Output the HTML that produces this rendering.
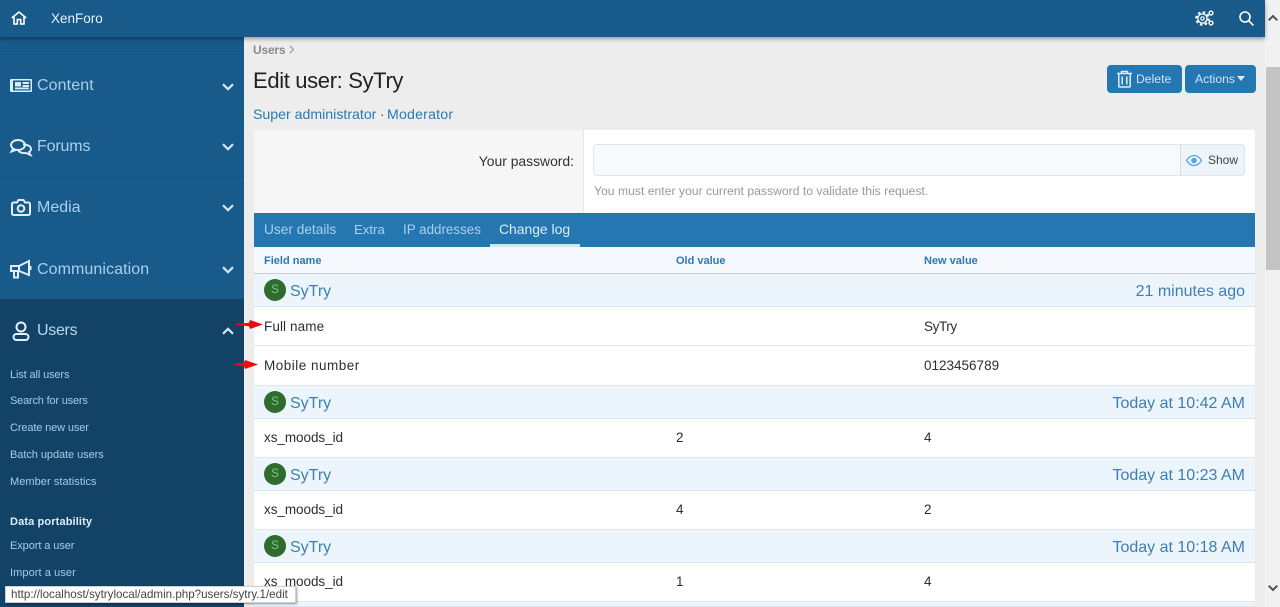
<!DOCTYPE html>
<html><head><meta charset="utf-8"><title>Edit user: SyTry</title>
<style>
html,body{margin:0;padding:0;width:1280px;height:607px;overflow:hidden;background:#ededed;font-family:"Liberation Sans",sans-serif;}
.a,.t{position:absolute;}
.t{white-space:nowrap;line-height:1;}
.nav{color:#a9d0ee;font-size:16px;left:37px;}
.sub{color:#a5cbe8;font-size:11px;left:10px;}
.h{color:#2d78b0;font-size:11px;font-weight:bold;}
.c{color:#2e2e2e;font-size:13.5px;}
.n{color:#3d7fb5;font-size:16px;left:290px;}
.d{color:#3d7fb5;font-size:16px;right:35px;}
.row{left:254px;width:1001px;background:#fff;border-bottom:1px solid #e6e6e6;box-sizing:border-box;}
.hd{left:254px;width:1001px;background:#edf5fc;border-bottom:1px solid #d8e4ee;box-sizing:border-box;}
.av{left:264px;width:22px;height:22px;border-radius:50%;background:#2f6b2f;color:#7fc47f;font-size:12px;line-height:20px;text-align:center;}
svg{position:absolute;overflow:visible;}
</style></head><body>

<!-- sidebar -->
<div class="a" style="left:0;top:37px;width:244px;height:570px;background:#185a8a;"></div>
<div class="a" style="left:0;top:54px;width:244px;height:1px;background:#175583;"></div>
<div class="a" style="left:0;top:115px;width:244px;height:1px;background:#175583;"></div>
<div class="a" style="left:0;top:176px;width:244px;height:1px;background:#175583;"></div>
<div class="a" style="left:0;top:237px;width:244px;height:1px;background:#175583;"></div>
<div class="a" style="left:0;top:299px;width:244px;height:308px;background:#124367;"></div>

<!-- header -->
<div class="a" style="left:0;top:0;width:1265px;height:37px;background:#185a8a;box-shadow:0 2px 4px rgba(0,0,0,.35);z-index:3;"></div>
<svg style="left:11px;top:11px;z-index:4" width="16" height="14" viewBox="0 0 16 14" fill="none" stroke="#fff" stroke-width="1.6"><path d="M0.8 7 8 1l7.2 6M3 5.5V13h3.3V8.6h3.4V13H13V5.5"/></svg>
<span class="t" style="left:51px;top:12px;color:#e6f1fa;font-size:13.500px;z-index:4">XenForo</span>
<svg style="left:1196px;top:10px;z-index:4" width="18" height="16" viewBox="0 0 18 16" fill="none" stroke="#fff"><circle cx="6.500" cy="8.500" r="6.300" stroke-width="2" stroke-dasharray="2.600 2.350"/><circle cx="6.500" cy="8.500" r="4.600" stroke-width="1.300"/><circle cx="6.500" cy="8.500" r="1.700" stroke-width="1.200"/><circle cx="15" cy="3" r="1.900" stroke-width="1.400"/><circle cx="15" cy="13" r="1.900" stroke-width="1.400"/></svg>
<svg style="left:1239px;top:11px;z-index:4" width="15" height="15" viewBox="0 0 15 15" fill="none" stroke="#fff" stroke-width="1.6"><circle cx="6" cy="6" r="5"/><path d="M9.700 9.700 14.400 14.400"/></svg>

<!-- scrollbar -->
<div class="a" style="left:1265px;top:0;width:15px;height:607px;background:#f1f1f1;"></div>
<div class="a" style="left:1266px;top:67px;width:14px;height:203px;background:#c4c4c4;"></div>
<svg style="left:1268px;top:15px" width="10" height="6" viewBox="0 0 10 6" fill="none" stroke="#505050" stroke-width="2"><path d="M0.700 5.300 5 1l4.300 4.300"/></svg>
<svg style="left:1268px;top:585px" width="10" height="6" viewBox="0 0 10 6" fill="none" stroke="#505050" stroke-width="2"><path d="M0.700 0.700 5 5l4.300-4.300"/></svg>

<!-- nav -->
<svg style="left:10px;top:79px" width="22" height="13" viewBox="0 0 22 13"><rect x="0" y="0" width="22" height="13" rx="1" fill="#d8ecfb"/><rect x="3" y="1.500" width="17.500" height="10" fill="#185a8a"/><rect x="5" y="3" width="6" height="4.500" fill="#d8ecfb"/><rect x="12.500" y="3" width="6.500" height="2" fill="#d8ecfb"/><rect x="12.500" y="6" width="6.500" height="2" fill="#d8ecfb"/><rect x="5" y="8.500" width="14" height="1.800" fill="#d8ecfb"/></svg>
<span class="t nav" style="top:78px;letter-spacing:.1px">Content</span>
<svg style="left:10px;top:139px" width="22" height="17" viewBox="0 0 22 17" fill="none" stroke="#e0effb" stroke-width="1.900"><ellipse cx="8" cy="6" rx="7" ry="5"/><path d="M3 10 1.500 12.500 6 11"/><path d="M13 5.500c4 0 8 1.500 8 4.500 0 1.500-1 2.500-2 3.200l1.500 2.800-4.500-2c-3 .5-7-.5-8-3"/></svg>
<span class="t nav" style="top:139px;letter-spacing:-.15px">Forums</span>
<svg style="left:11px;top:199px" width="20" height="17" viewBox="0 0 20 17" fill="none" stroke="#e0effb" stroke-width="2"><path d="M2.500 3.500h3.500L7.500 1h5L14 3.500h3.500a1.500 1.500 0 0 1 1.500 1.500v9.500a1.500 1.500 0 0 1-1.500 1.500h-15A1.500 1.500 0 0 1 1 14.500V5a1.500 1.500 0 0 1 1.500-1.500z"/><circle cx="10" cy="9.500" r="3.300"/></svg>
<span class="t nav" style="top:200px">Media</span>
<svg style="left:10px;top:260px" width="22" height="19" viewBox="0 0 22 19" fill="none" stroke="#e0effb" stroke-width="2"><path d="M1 6h8l10-5v14L9 11H1z"/><path d="M4 11v6.500h4V11"/><path d="M20.500 6v4"/><path d="M9 6v5"/></svg>
<span class="t nav" style="top:262px;letter-spacing:.08px">Communication</span>
<svg style="left:12px;top:321px" width="18" height="20" viewBox="0 0 18 20" fill="none" stroke="#e4f1fb" stroke-width="2"><circle cx="9" cy="6" r="4.500"/><rect x="1.500" y="13" width="15" height="6" rx="3"/></svg>
<span class="t nav" style="top:323px;color:#b9d8ef;letter-spacing:-.3px">Users</span>
<svg style="left:222px;top:83px" width="12" height="8" viewBox="0 0 12 8" fill="none" stroke="#cfe6f8" stroke-width="2.200"><path d="M1 1.200 6 6.200l5-5"/></svg>
<svg style="left:222px;top:143px" width="12" height="8" viewBox="0 0 12 8" fill="none" stroke="#cfe6f8" stroke-width="2.200"><path d="M1 1.200 6 6.200l5-5"/></svg>
<svg style="left:222px;top:204px" width="12" height="8" viewBox="0 0 12 8" fill="none" stroke="#cfe6f8" stroke-width="2.200"><path d="M1 1.200 6 6.200l5-5"/></svg>
<svg style="left:222px;top:266px" width="12" height="8" viewBox="0 0 12 8" fill="none" stroke="#cfe6f8" stroke-width="2.200"><path d="M1 1.200 6 6.200l5-5"/></svg>
<svg style="left:222px;top:327px" width="12" height="8" viewBox="0 0 12 8" fill="none" stroke="#cfe6f8" stroke-width="2.200"><path d="M1 6.800 6 1.800l5 5"/></svg>
<span class="t sub" style="top:370px;letter-spacing:-.13px">List all users</span>
<span class="t sub" style="top:396px;letter-spacing:-.19px">Search for users</span>
<span class="t sub" style="top:423px;letter-spacing:-.13px">Create new user</span>
<span class="t sub" style="top:450px;letter-spacing:-.06px">Batch update users</span>
<span class="t sub" style="top:477px;letter-spacing:.06px">Member statistics</span>
<span class="t sub" style="top:517px;color:#dcedfa;font-weight:bold;letter-spacing:.13px">Data portability</span>
<span class="t sub" style="top:541px;letter-spacing:-.08px">Export a user</span>
<span class="t sub" style="top:568px;letter-spacing:.08px">Import a user</span>

<!-- page head -->
<span class="t" style="left:253px;top:44px;color:#8a8a8a;font-size:12px;font-weight:bold;letter-spacing:-.2px">Users</span>
<svg style="left:289px;top:45px" width="6" height="9" viewBox="0 0 6 9" fill="none" stroke="#a0a0a0" stroke-width="1.300"><path d="M1 1l3.500 3.500L1 8"/></svg>
<span class="t" style="left:253px;top:70px;color:#222;font-size:22px;letter-spacing:-.35px">Edit user: SyTry</span>
<span class="t" style="left:253px;top:107px;color:#2d78b0;font-size:14.150px">Super administrator</span>
<span class="t" style="left:380px;top:107px;color:#555;font-size:14px">·</span>
<span class="t" style="left:387px;top:107px;color:#2d78b0;font-size:14.150px;letter-spacing:.2px">Moderator</span>

<div class="a" style="left:1107px;top:65px;width:75px;height:28px;background:#2577b1;border-radius:4px;"></div>
<svg style="left:1116px;top:70px" width="17" height="18" viewBox="0 0 17 18" fill="none" stroke="#dcedfa" stroke-width="1.500"><path d="M1 3.500h15M5.500 3.500V1.500h6v2M2.800 3.500V16a1 1 0 0 0 1 1h9.400a1 1 0 0 0 1-1V3.500M6.200 6.500v8M10.800 6.500v8"/></svg>
<span class="t" style="left:1136px;top:73px;color:#cfe4f5;font-size:12.200px">Delete</span>
<div class="a" style="left:1185px;top:65px;width:71px;height:28px;background:#2577b1;border-radius:4px;"></div>
<span class="t" style="left:1195px;top:73px;color:#cfe4f5;font-size:12.200px">Actions</span>
<div class="a" style="left:1237px;top:76px;width:0;height:0;border-left:4.500px solid transparent;border-right:4.500px solid transparent;border-top:5px solid #dcedfa;"></div>

<!-- form block -->
<div class="a" style="left:254px;top:130px;width:1001px;height:83px;background:#fff;border-radius:3px 3px 0 0;"></div>
<div class="a" style="left:254px;top:130px;width:330px;height:83px;background:#f6f6f6;border-right:1px solid #e6e6e6;box-sizing:border-box;border-radius:3px 0 0 0;"></div>
<span class="t" style="right:706px;top:155px;color:#333;font-size:13.900px">Your password:</span>
<div class="a" style="left:593px;top:144px;width:652px;height:32px;background:#f7fafd;border:1px solid #dfe5ea;box-sizing:border-box;border-radius:4px;"></div>
<div class="a" style="left:1180px;top:145px;width:64px;height:30px;background:#edf4fa;border-left:1px solid #d5dde3;box-sizing:border-box;border-radius:0 3px 3px 0;"></div>
<svg style="left:1186px;top:155px" width="16" height="11" viewBox="0 0 16 11"><path d="M.5 5.500C3 1.800 5.500.5 8 .5s5 1.300 7.500 5C13 9.200 10.500 10.500 8 10.500S3 9.200.5 5.500z" fill="none" stroke="#55a5e0" stroke-width="1.300"/><circle cx="8" cy="5.500" r="2.800" fill="#55a5e0"/></svg>
<span class="t" style="left:1208px;top:154px;color:#444;font-size:12px">Show</span>
<span class="t" style="left:594px;top:185px;color:#999;font-size:12.200px">You must enter your current password to validate this request.</span>

<!-- tabs -->
<div class="a" style="left:254px;top:213px;width:1001px;height:34px;background:#2577b1;"></div>
<span class="t" style="left:264px;top:223px;color:#a9d0ee;font-size:13.700px">User details</span>
<span class="t" style="left:354px;top:223px;color:#a9d0ee;font-size:13.200px">Extra</span>
<span class="t" style="left:403px;top:223px;color:#a9d0ee;font-size:13.400px">IP addresses</span>
<span class="t" style="left:499px;top:223px;color:#dcedfa;font-size:13.900px">Change log</span>
<div class="a" style="left:490px;top:244px;width:90px;height:3px;background:#d5e6f3;"></div>

<!-- table -->
<div class="a" style="left:254px;top:247px;width:1001px;height:27px;background:#f5f9fd;border-bottom:1px solid #c9ced2;box-sizing:border-box;"></div>
<span class="t h" style="left:264px;top:256px">Field name</span>
<span class="t h" style="left:676px;top:256px">Old value</span>
<span class="t h" style="left:924px;top:256px">New value</span>

<div class="a hd" style="top:274px;height:33px;"></div>
<div class="a av" style="top:279px">S</div>
<span class="t n" style="top:284px">SyTry</span>
<span class="t d" style="top:284px">21 minutes ago</span>
<div class="a row" style="top:307px;height:39px;"></div>
<span class="t c" style="left:264px;top:320px;letter-spacing:.1px">Full name</span>
<span class="t c" style="left:924px;top:320px;letter-spacing:-.4px">SyTry</span>
<div class="a row" style="top:346px;height:40px;"></div>
<span class="t c" style="left:264px;top:359px;letter-spacing:.5px">Mobile number</span>
<span class="t c" style="left:924px;top:359px">0123456789</span>

<div class="a hd" style="top:386px;height:33px;"></div>
<div class="a av" style="top:391px">S</div>
<span class="t n" style="top:396px">SyTry</span>
<span class="t d" style="top:396px">Today at 10:42 AM</span>
<div class="a row" style="top:419px;height:39px;"></div>
<span class="t c" style="left:264px;top:431px;letter-spacing:-.05px">xs_moods_id</span>
<span class="t c" style="left:676px;top:431px">2</span>
<span class="t c" style="left:924px;top:431px">4</span>

<div class="a hd" style="top:458px;height:33px;"></div>
<div class="a av" style="top:463px">S</div>
<span class="t n" style="top:468px">SyTry</span>
<span class="t d" style="top:468px">Today at 10:23 AM</span>
<div class="a row" style="top:491px;height:39px;"></div>
<span class="t c" style="left:264px;top:503px;letter-spacing:-.05px">xs_moods_id</span>
<span class="t c" style="left:676px;top:503px">4</span>
<span class="t c" style="left:924px;top:503px">2</span>

<div class="a hd" style="top:530px;height:33px;"></div>
<div class="a av" style="top:535px">S</div>
<span class="t n" style="top:540px">SyTry</span>
<span class="t d" style="top:540px">Today at 10:18 AM</span>
<div class="a row" style="top:563px;height:39px;"></div>
<span class="t c" style="left:264px;top:575px;letter-spacing:-.05px">xs_moods_id</span>
<span class="t c" style="left:676px;top:575px">1</span>
<span class="t c" style="left:924px;top:575px">4</span>
<div class="a hd" style="top:602px;height:5px;"></div>

<!-- red arrows -->
<svg style="left:236px;top:320px" width="28" height="9" viewBox="0 0 28 9"><path d="M0 4 13 2.800 14 0 27 4.500 14 9 13 6.200 0 5z" fill="#ee0a12"/></svg>
<svg style="left:234px;top:360px" width="25" height="9" viewBox="0 0 25 9"><path d="M0 4 10 2.800 11 0 24 4.500 11 9 10 6.200 0 5z" fill="#ee0a12"/></svg>

<!-- status tooltip -->
<div class="a t" style="left:5px;top:586px;width:291px;height:17px;box-sizing:border-box;background:#fff;border:1px solid #d0d0d0;box-shadow:1px 1px 2px rgba(0,0,0,.4);color:#444;font-size:11.600px;line-height:15px;padding-left:5px;z-index:6;">http://localhost/sytrylocal/admin.php?users/sytry.1/edit</div>
</body></html>
